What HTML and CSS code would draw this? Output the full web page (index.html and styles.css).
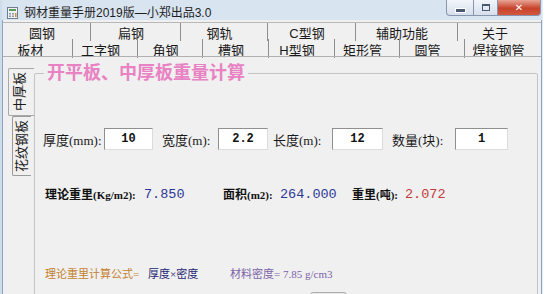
FILE: index.html
```html
<!DOCTYPE html>
<html>
<head>
<meta charset="utf-8">
<title>钢材重量手册</title>
<link rel="stylesheet" href="styles.css">
</head>
<body>
<div class="window">
  <div class="titlebar">
    <svg class="app-icon" width="11" height="12" viewBox="0 0 11 12">
      <rect x="0.5" y="0.5" width="10" height="11" fill="#eef2f6" stroke="#6f7f90"/>
      <rect x="2" y="2" width="7" height="2" fill="#5a9a5a"/>
      <path d="M2 6h2v1.5H2zM5 6h2v1.5H5zM2 8.5h2V10H2zM5 8.5h2V10H5z" fill="#8a98a8"/>
      <rect x="8" y="6" width="1.5" height="4" fill="#d08a3a"/>
    </svg>
    <span class="title">钢材重量手册2019版—小郑出品3.0</span>
    <div class="caption">
      <span class="cap cap-min"><i></i></span>
      <span class="cap cap-max"><i></i></span>
      <span class="cap cap-close">✕</span>
    </div>
  </div>

  <div class="client">
    <div class="tabrow row-back">
      <div class="tab">圆钢</div>
      <div class="tab">扁钢</div>
      <div class="tab">钢轨</div>
      <div class="tab">C型钢</div>
      <div class="tab">辅助功能</div>
      <div class="tab">关于</div>
    </div>
    <div class="tabrow row-front">
      <div class="tab active">板材</div>
      <div class="tab">工字钢</div>
      <div class="tab">角钢</div>
      <div class="tab">槽钢</div>
      <div class="tab">H型钢</div>
      <div class="tab">矩形管</div>
      <div class="tab">圆管</div>
      <div class="tab">焊接钢管</div>
    </div>

    <div class="panel">
      <div class="vtabs">
        <div class="vtab active"><span>中厚板</span></div>
        <div class="vtab"><span>花纹钢板</span></div>
      </div>

      <fieldset class="group">
        <legend>开平板、中厚板重量计算</legend>

        <div class="fields">
          <label class="l-thick">厚度(mm):</label><input class="num n-thick" value="10">
          <label class="l-width">宽度(m):</label><input class="num n-width" value="2.2">
          <label class="l-len">长度(m):</label><input class="num n-len" value="12">
          <label class="l-qty">数量(块):</label><input class="num n-qty" value="1">
        </div>

        <div class="results">
          <span class="res-label r-unit">理论重里<small>(Kg/m2):</small></span>
          <span class="res-value blue v-unit">7.850</span>
          <span class="res-label r-area">面积<small>(m2):</small></span>
          <span class="res-value blue v-area">264.000</span>
          <span class="res-label r-weight">重里<small>(吨):</small></span>
          <span class="res-value red">2.072</span>
        </div>

        <div class="formula">
          <span class="f-title">理论重里计算公式=</span>
          <span class="f-expr">厚度×密度</span>
          <span class="f-density">材料密度= 7.85 g/cm3</span>
        </div>

        <div class="btn"></div>
      </fieldset>
    </div>
  </div>
</div>
</body>
</html>
```

FILE: styles.css
```css
* {
    margin: 0;
    padding: 0;
    box-sizing: border-box;
}

body {
    background: #fff;
    font-family: "Liberation Serif", "Noto Sans CJK SC", sans-serif;
    color: #1a1a1a;
    overflow: hidden;
}

.window {
    width: 543px;
    height: 294px;
    background: #d9e4f1;
    border-left: 2px solid #cfdcec;
    border-right: 1px solid #e4ecf6;
    display: flex;
    flex-direction: column;
}

/* title bar */
.titlebar {
    height: 22px;
    display: flex;
    align-items: flex-start;
}

.app-icon {
    margin: 7px 0 0 5px;
}

.title {
    margin: 6px 0 0 6px;
    font-family: "Liberation Sans", "Noto Sans CJK SC", sans-serif;
    font-size: 12px;
    line-height: 14px;
    color: #1e1e1e;
}

.caption {
    margin-left: auto;
    margin-right: 1px;
    display: flex;
}

.cap {
    height: 16px;
    display: flex;
    align-items: center;
    justify-content: center;
    border: 1px solid #8796ae;
    border-top: none;
    background: linear-gradient(#f2f5fa, #d6dfec);
}

.cap-min {
    width: 28px;
    border-radius: 0 0 0 4px;
}

.cap-min i {
    width: 9px;
    height: 3px;
    margin-top: 5px;
    background: #4a5870;
    border: 1px solid #fff;
    box-sizing: content-box;
}

.cap-max {
    width: 24px;
    border-left: none;
}

.cap-max i {
    width: 8px;
    height: 7px;
    border: 1px solid #4a5870;
    border-top-width: 2px;
}

.cap-close {
    width: 43px;
    border-left: none;
    border-radius: 0 0 4px 0;
    background: linear-gradient(#e8a596, #c7432c 55%, #d2593e);
    color: #fff;
    font-family: "DejaVu Sans", sans-serif;
    font-size: 10px;
    font-weight: bold;
}

/* client area */
.client {
    flex: 1;
    background: #f0f0f0;
    border-left: 1px solid #8ba3c6;
    border-right: 1px solid #8ba3c6;
    padding-top: 2px;
    display: flex;
    flex-direction: column;
}

.tabrow {
    display: grid;
}

.row-back {
    grid-template-columns: 88px 90px 87px 88px 102px 1fr;
    height: 17px;
    border-top: 1px solid #b8b8b8;
}

.row-front {
    grid-template-columns: 70px 65px 65px 66px 66px 65px 65px 1fr;
    height: 17px;
}

.tab {
    font-family: "Liberation Sans", "Noto Sans CJK SC", sans-serif;
    font-size: 13px;
    line-height: 15px;
    text-align: center;
    padding-right: 9px;
    border-right: 1px solid #8e8e8e;
    color: #1a1a1a;
}

.row-back .tab {
    padding-top: 3px;
}

.row-front .tab {
    padding-top: 4px;
}

.tab:last-child {
    border-right: none;
}

.tab.active {
    padding-right: 14px;
}

/* tab page */
.panel {
    flex: 1;
    display: flex;
    align-items: flex-start;
    border-top: 1px solid #b0b0b0;
    padding: 6px 3px 0 5px;
    overflow: hidden;
}

.vtabs {
    width: 26px;
    margin-top: 5px;
    display: flex;
    flex-direction: column;
}

.vtab {
    height: 60px;
    width: 19px;
    margin-left: 4px;
    border: 1px solid #9a9a9a;
    border-right: none;
    border-radius: 2px 0 0 2px;
    display: flex;
    align-items: center;
    justify-content: center;
    font-family: "Liberation Sans", "Noto Sans CJK SC", sans-serif;
    font-size: 13px;
    line-height: 14px;
}

.vtab.active {
    width: 26px;
    height: 48px;
    margin-left: 0;
    padding-right: 4px;
    border-color: #a8a8a8;
}

.vtab span {
    writing-mode: vertical-rl;
    text-orientation: sideways;
    transform: rotate(180deg);
}

/* group box */
.group {
    flex: 1;
    min-width: 0;
    height: 260px;
    border: 1px solid #c4c4c4;
    border-radius: 2px;
    padding: 0 8px;
}

.group legend {
    margin-left: 1px;
    padding: 0 3px;
    font-family: "Liberation Sans", "Noto Sans CJK SC", sans-serif;
    font-size: 18px;
    font-weight: bold;
    line-height: 20px;
    color: #e882c3;
}

.fields {
    margin-top: 45px;
    height: 22px;
    display: flex;
    align-items: center;
    font-size: 13px;
}

.fields label {
    white-space: nowrap;
}

.l-thick { width: 61px; }
.l-width { width: 56px; margin-left: 9px; }
.l-len { width: 59px; margin-left: 5px; }
.l-qty { width: 63px; margin-left: 9px; }

.num {
    height: 22px;
    border: 1px solid #dcdcdc;
    border-top-color: #8f8f8f;
    border-left-color: #8f8f8f;
    background: #fff;
    text-align: center;
    font-family: "Liberation Mono", monospace;
    font-size: 12px;
    font-weight: bold;
    color: #111;
    outline: none;
}

.n-thick { width: 49px; }
.n-width { width: 50px; }
.n-len { width: 51px; }
.n-qty { width: 53px; }

.results {
    margin: 32px 0 0 2px;
    height: 24px;
    display: flex;
    align-items: center;
}

.res-label {
    font-size: 12px;
    font-weight: bold;
    color: #111;
    white-space: nowrap;
}

.res-label small {
    font-size: 11px;
}

.r-unit { width: 99px; }
.r-area { width: 57px; }
.r-weight { width: 53px; }

.res-value {
    font-family: "Liberation Mono", monospace;
    font-size: 13.5px;
}

.v-unit { width: 79px; }
.v-area { width: 72px; }

.res-value.blue {
    color: #2c3896;
}

.res-value.red {
    color: #c43a3a;
}

.formula {
    margin: 61px 0 0 2px;
    display: flex;
    align-items: center;
    font-size: 11px;
    line-height: 14px;
    white-space: nowrap;
}

.f-title {
    width: 103px;
    color: #c4812f;
}

.f-expr {
    width: 82px;
    color: #262672;
}

.f-density {
    color: #7b62a8;
}

.btn {
    margin: 11px 0 0 267px;
    width: 37px;
    height: 22px;
    border: 1px solid #adadad;
    border-radius: 3px;
    background: #e8e8e8;
}
```
